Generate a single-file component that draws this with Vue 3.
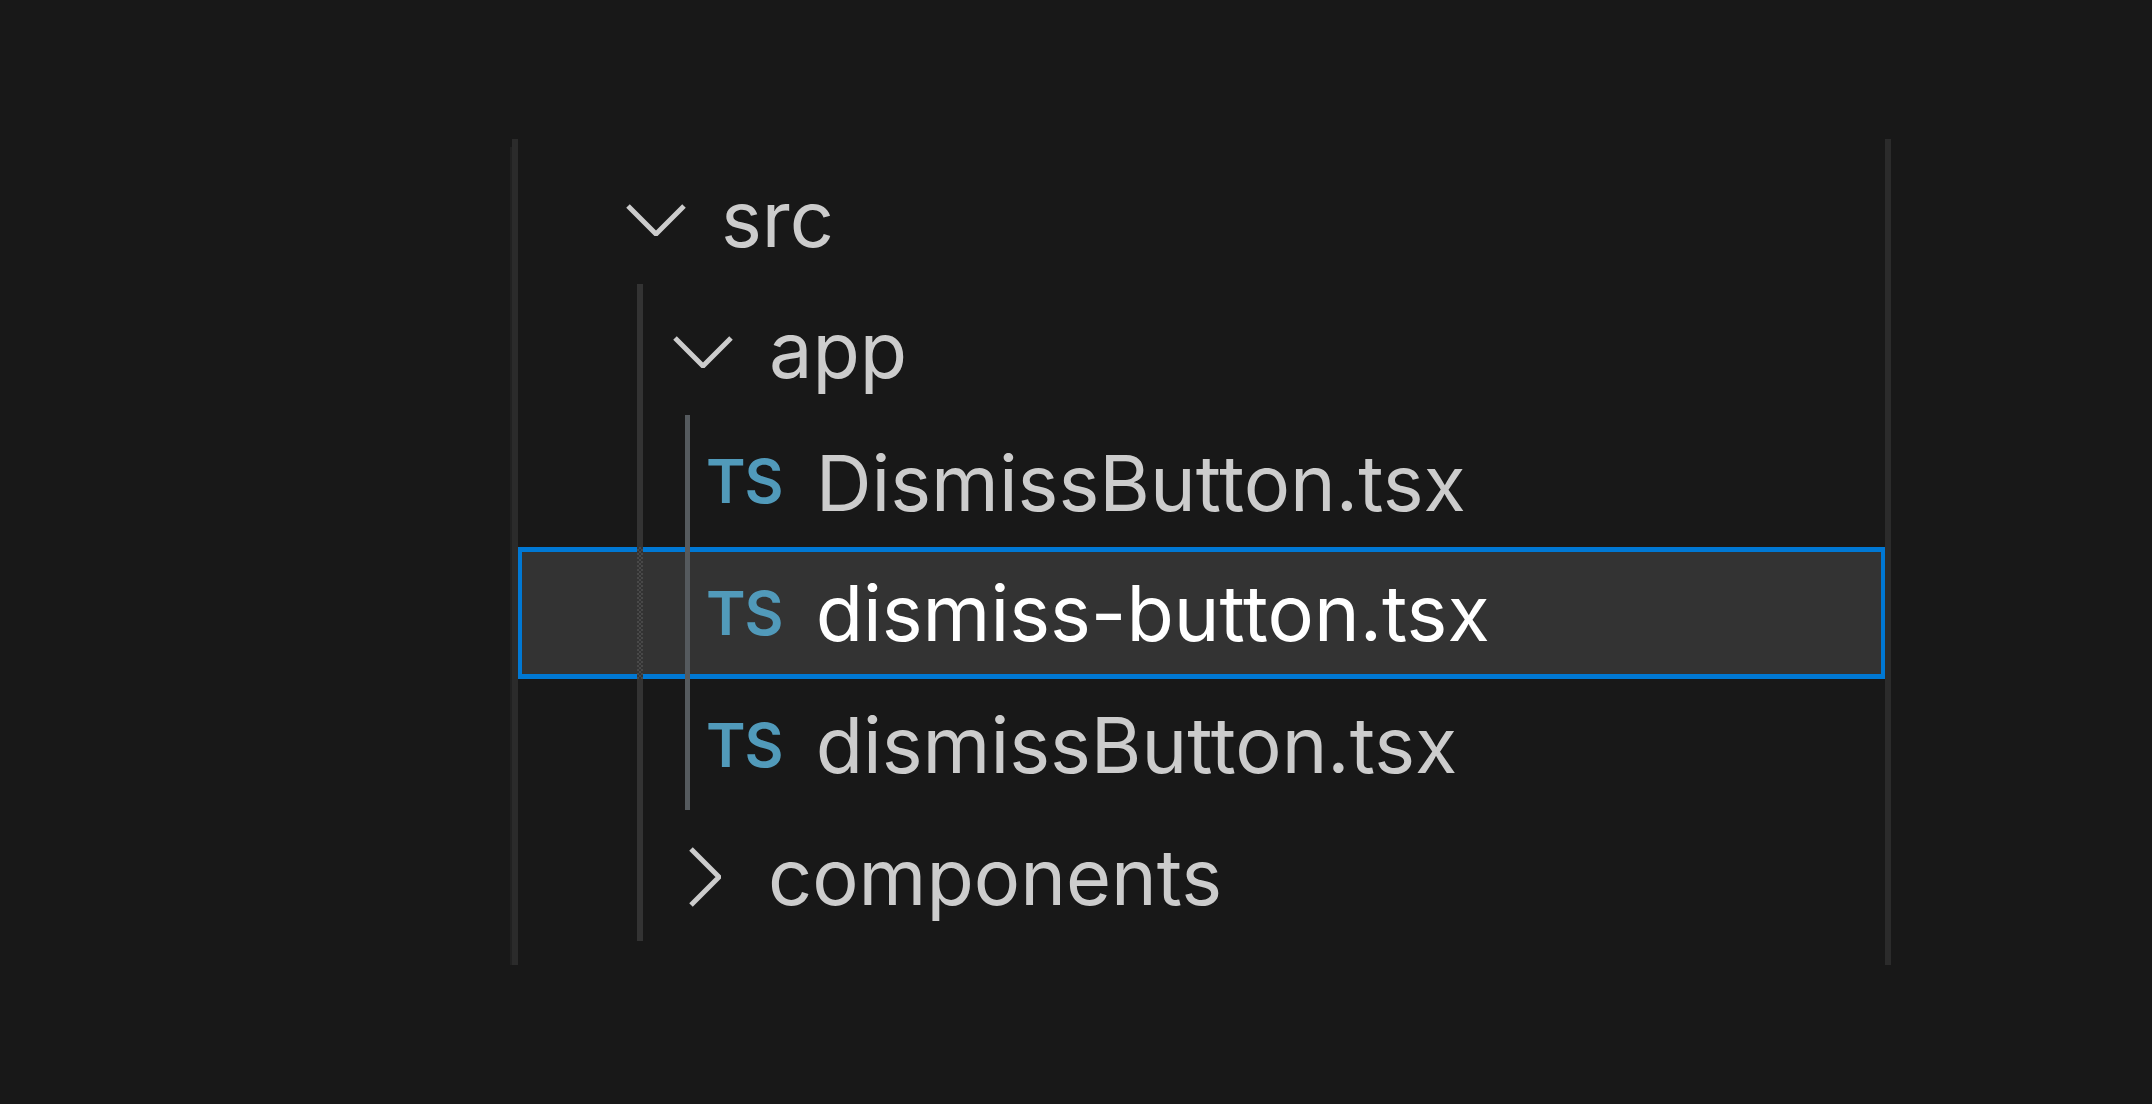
<script setup>
const files = [
  { name: 'DismissButton.tsx' },
  { name: 'dismiss-button.tsx', selected: true },
  { name: 'dismissButton.tsx' },
]
</script>

<template>
  <div class="page">
    <div class="tree">
      <div class="row folder-row">
        <svg class="chevron" viewBox="0 0 60 32"><path d="M2 2 L30 30 L58 2" /></svg>
        <span class="label">src</span>
      </div>
      <div class="group group-src">
        <div class="row app-row">
          <svg class="chevron" viewBox="0 0 60 32"><path d="M2 2 L30 30 L58 2" /></svg>
          <span class="label">app</span>
        </div>
        <div class="group group-app">
          <div
            v-for="file in files"
            :key="file.name"
            class="row file-row"
            :class="{ selected: file.selected }"
          >
            <span class="ts">TS</span>
            <span class="label">{{ file.name }}</span>
          </div>
        </div>
        <div class="row components-row">
          <svg class="chevron closed" viewBox="0 0 32 60"><path d="M2 2 L30 30 L2 58" /></svg>
          <span class="label">components</span>
        </div>
      </div>
    </div>
  </div>
</template>

<style>
html, body {
  background: #181818;
}
</style>

<style scoped>
.page {
  width: 2152px;
  height: 1104px;
  box-sizing: border-box;
  padding: 139px 0 0 512px;
  background: #181818;
  font-family: Inter, "Liberation Sans", sans-serif;
}

.tree {
  position: relative;
  width: 1379px;
  height: 826px;
  box-sizing: border-box;
  padding-top: 12px;
  border-left: 6px solid #2b2b2b;
  border-right: 6px solid #2b2b2b;
}

/* faint ghost line left of the panel edge */
.tree::before {
  content: "";
  position: absolute;
  left: -8px;
  top: 8px;
  bottom: 0;
  width: 2px;
  background: #212121;
}

.row {
  height: 132px;
  box-sizing: border-box;
  display: flex;
  align-items: center;
  font-size: 77.4px;
  color: #cccccc;
  white-space: nowrap;
}

.chevron {
  width: 60px;
  height: 32px;
  flex: none;
  margin-top: 6px;
  fill: none;
  stroke: #cccccc;
  stroke-width: 5;
}

.chevron.closed {
  width: 32px;
  height: 60px;
  margin-top: 0;
}

.folder-row {
  padding-left: 108px;
}

.folder-row .label {
  margin-left: 35px;
  margin-top: 4px;
}

.app-row {
  padding-left: 155px;
}

.app-row .label {
  margin-left: 36px;
  margin-top: 2px;
}

.components-row {
  padding-left: 171px;
}

.components-row .label {
  margin-left: 47px;
}

.group {
  position: relative;
}

.group::before {
  content: "";
  position: absolute;
  z-index: 1;
}

.group-src::before {
  left: 119px;
  top: 1px;
  bottom: 2px;
  width: 6px;
  background: #333333;
}

.group-app::before {
  left: 167px;
  top: 0;
  bottom: 1px;
  width: 5px;
  background: #555a5e;
}

.file-row {
  padding-left: 188px;
}

.file-row .label {
  margin-left: 33px;
}

.file-row:first-child .label {
  margin-top: 4px;
}

.ts {
  font-size: 60px;
  font-weight: 600;
  letter-spacing: -1px;
  margin-bottom: 1px;
  color: #519aba;
}

.selected {
  position: relative;
  border: 4px solid #0078d4;
  border-top-width: 5px;
  border-bottom-width: 5px;
  background: #333333;
  color: #ffffff;
  padding-left: 184px;
}

/* the src guide shows through the selection as a dither */
.selected::before {
  content: "";
  position: absolute;
  z-index: 2;
  left: 115px;
  top: -5px;
  bottom: -5px;
  width: 6px;
  background: repeating-conic-gradient(#484848 0 25%, #333333 0 50%) 0 0 / 4px 4px;
}
</style>
